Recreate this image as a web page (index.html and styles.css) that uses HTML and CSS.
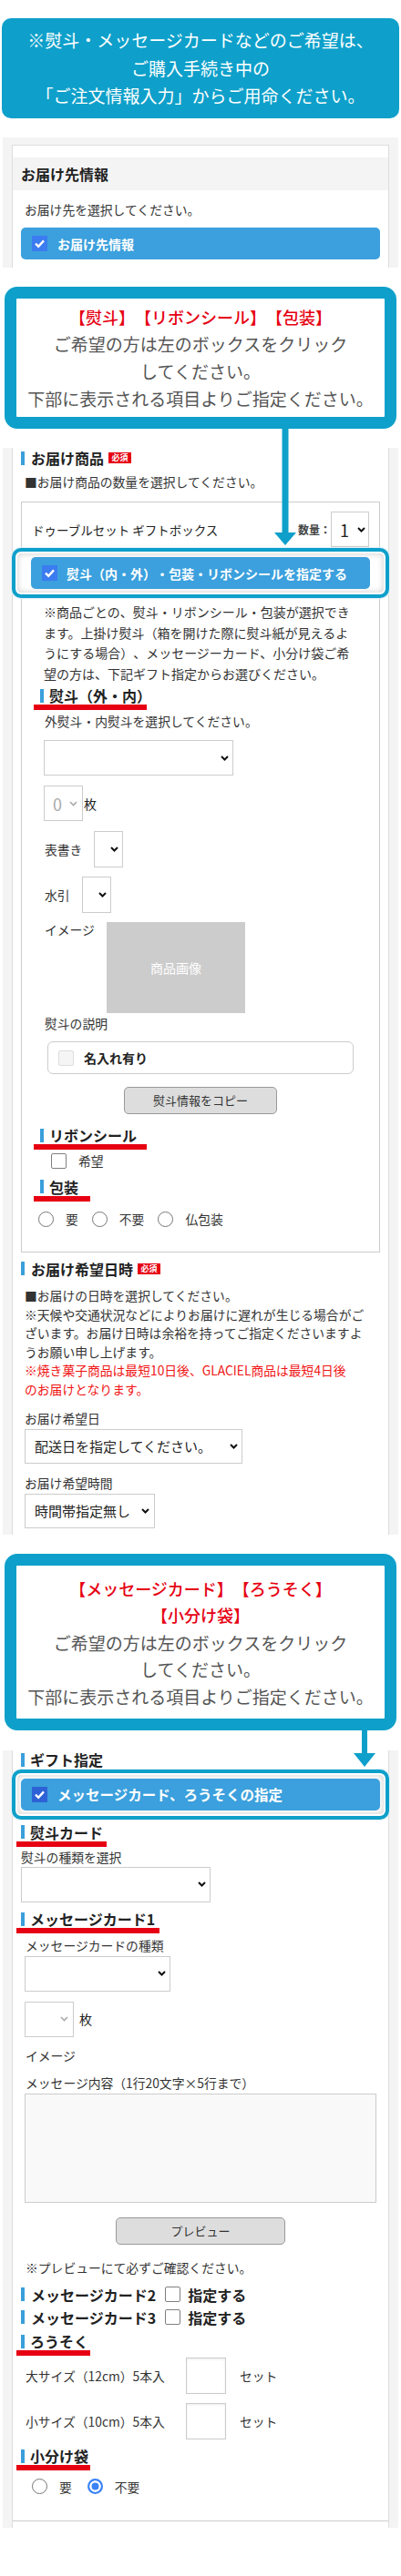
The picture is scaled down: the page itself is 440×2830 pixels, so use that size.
FILE: index.html
```html
<!DOCTYPE html>
<html lang="ja">
<head>
<meta charset="utf-8">
<title>ギフト指定</title>
<link rel="stylesheet" href="styles.css">
</head>
<body>
<main class="page">
  <div class="banner">※熨斗・メッセージカードなどのご希望は、<br>ご購入手続き中の<br>「ご注文情報入力」からご用命ください。</div>

  <section class="panel panel-first">
    <div class="card card-first">
      <h2 class="card-head">お届け先情報</h2>
      <p class="txt txt-first">お届け先を選択してください。</p>
      <div class="opt-btn opt-btn-first">
        <svg class="cb" viewBox="0 0 17 17"><rect width="17" height="17" fill="#3b7cf0"/><path d="M4 8.6l3.2 3.2L13 5.4" fill="none" stroke="#fff" stroke-width="2.4"/></svg>
        <span>お届け先情報</span>
      </div>
    </div>
  </section>

  <div class="callout callout-1">
    <p class="c-red">【熨斗】【リボンシール】【包装】</p>
    <p class="c-gray">ご希望の方は左のボックスをクリック<br>してください。<br>下部に表示される項目よりご指定ください。</p>
    <svg class="arrow arrow-1" viewBox="0 0 24 128"><rect x="8.5" y="0" width="7" height="115"/><polygon points="0,114 24,114 12,128"/></svg>
  </div>

  <section class="panel">
    <div class="card card-goods">
      <h3 class="sec-head sh-goods">お届け商品<span class="req">必須</span></h3>
      <p class="txt lead">■お届け商品の数量を選択してください。</p>
      <div class="product">
        <div class="prod-row">
          <span class="prod-name">ドゥーブルセット ギフトボックス</span>
          <span class="qty"><span class="qty-label">数量：</span><span class="sel sel-qty"><span>1</span><svg class="chev" viewBox="0 0 9 6"><path d="M1 1l3.5 3.5L8 1" fill="none" stroke="#111" stroke-width="2"/></svg></span></span>
        </div>
        <div class="ring ring-1">
          <div class="opt-btn opt-btn-sm">
            <svg class="cb" viewBox="0 0 17 17"><rect width="17" height="17" fill="#3b7cf0"/><path d="M4 8.6l3.2 3.2L13 5.4" fill="none" stroke="#fff" stroke-width="2.4"/></svg>
            <span>熨斗（内・外）・包装・リボンシールを指定する</span>
          </div>
        </div>
        <div class="gift-detail">
          <p class="note">※商品ごとの、熨斗・リボンシール・包装が選択でき<br>ます。上掛け熨斗（箱を開けた際に熨斗紙が見えるよ<br>うにする場合）、メッセージーカード、小分け袋ご希<br>望の方は、下記ギフト指定からお選びください。</p>
          <h4 class="ul-head ul-in w124 ul-first">熨斗（外・内）</h4>
          <p class="txt d-sub">外熨斗・内熨斗を選択してください。</p>
          <div class="sel sel-noshi"><svg class="chev" viewBox="0 0 9 6"><path d="M1 1l3.5 3.5L8 1" fill="none" stroke="#111" stroke-width="2"/></svg></div>
          <div class="count-row"><span class="sel sel-count"><span>0</span><svg class="chev" viewBox="0 0 9 6"><path d="M1 1l3.5 3.5L8 1" fill="none" stroke="#aaa" stroke-width="1.6"/></svg></span><span class="unit">枚</span></div>
          <div class="field-row fr-omote"><span class="txt">表書き</span><span class="sel sel-tiny"><svg class="chev" viewBox="0 0 9 6"><path d="M1 1l3.5 3.5L8 1" fill="none" stroke="#111" stroke-width="2"/></svg></span></div>
          <div class="field-row fr-mizu"><span class="txt">水引</span><span class="sel sel-tiny"><svg class="chev" viewBox="0 0 9 6"><path d="M1 1l3.5 3.5L8 1" fill="none" stroke="#111" stroke-width="2"/></svg></span></div>
          <div class="field-row fr-img"><span class="txt img-label">イメージ</span><div class="img-ph">商品画像</div></div>
          <p class="txt d-desc">熨斗の説明</p>
          <div class="name-box"><span class="cb-empty"></span><span>名入れ有り</span></div>
          <div class="btn-gray btn-copy">熨斗情報をコピー</div>
          <h4 class="ul-head ul-in w124 ul-ribbon">リボンシール</h4>
          <div class="check-row"><span class="cb-box"></span><span class="txt">希望</span></div>
          <h4 class="ul-head ul-in w62 ul-wrap">包装</h4>
          <div class="radio-row rr-wrap">
            <span class="radio"><span class="rd"></span>要</span>
            <span class="radio"><span class="rd"></span>不要</span>
            <span class="radio"><span class="rd"></span>仏包装</span>
          </div>
        </div>
      </div>
      <h3 class="sec-head sh-date">お届け希望日時<span class="req">必須</span></h3>
      <p class="txt notice">■お届けの日時を選択してください。<br>※天候や交通状況などによりお届けに遅れが生じる場合がご<br>ざいます。お届け日時は余裕を持ってご指定くださいますよ<br>うお願い申し上げます。<br><span class="red">※焼き菓子商品は最短10日後、GLACIEL商品は最短4日後<br>のお届けとなります。</span></p>
      <p class="txt lbl lbl-date">お届け希望日</p>
      <div class="sel sel-date"><span>配送日を指定してください。</span><svg class="chev" viewBox="0 0 9 6"><path d="M1 1l3.5 3.5L8 1" fill="none" stroke="#111" stroke-width="2"/></svg></div>
      <p class="txt lbl lbl-time">お届け希望時間</p>
      <div class="sel sel-time"><span>時間帯指定無し</span><svg class="chev" viewBox="0 0 9 6"><path d="M1 1l3.5 3.5L8 1" fill="none" stroke="#111" stroke-width="2"/></svg></div>
    </div>
  </section>

  <div class="callout callout-2">
    <p class="c-red">【メッセージカード】【ろうそく】<br>【小分け袋】</p>
    <p class="c-gray">ご希望の方は左のボックスをクリック<br>してください。<br>下部に表示される項目よりご指定ください。</p>
    <svg class="arrow arrow-2" viewBox="0 0 24 40"><rect x="9" y="0" width="6" height="26"/><polygon points="0,25 24,25 12,40"/></svg>
  </div>

  <section class="panel panel-last">
    <div class="card card-gift">
      <h3 class="sec-head sh-gift">ギフト指定</h3>
      <div class="ring ring-2">
        <div class="opt-btn opt-btn-lg">
          <svg class="cb" viewBox="0 0 17 17"><rect width="17" height="17" fill="#2d62d6"/><path d="M4 8.6l3.2 3.2L13 5.4" fill="none" stroke="#fff" stroke-width="2.4"/></svg>
          <span>メッセージカード、ろうそくの指定</span>
        </div>
      </div>
      <h4 class="ul-head ul-out w99 ul-noshi">熨斗カード</h4>
      <p class="txt g-sub">熨斗の種類を選択</p>
      <div class="sel sel-gnoshi"><svg class="chev" viewBox="0 0 9 6"><path d="M1 1l3.5 3.5L8 1" fill="none" stroke="#111" stroke-width="2"/></svg></div>
      <h4 class="ul-head ul-out w157 ul-mc1">メッセージカード1</h4>
      <p class="txt g-lbl g-mctype">メッセージカードの種類</p>
      <div class="sel sel-mctype"><svg class="chev" viewBox="0 0 9 6"><path d="M1 1l3.5 3.5L8 1" fill="none" stroke="#111" stroke-width="2"/></svg></div>
      <div class="count-row count-row-g"><span class="sel sel-count-g"><svg class="chev" viewBox="0 0 9 6"><path d="M1 1l3.5 3.5L8 1" fill="none" stroke="#aaa" stroke-width="1.6"/></svg></span><span class="unit unit-g">枚</span></div>
      <p class="txt g-lbl g-img">イメージ</p>
      <p class="txt g-lbl g-msg">メッセージ内容（1行20文字×5行まで）</p>
      <div class="textarea"></div>
      <div class="btn-gray btn-preview">プレビュー</div>
      <p class="txt g-lbl g-note">※プレビューにて必ずご確認ください。</p>
      <div class="sec-head mc-row mc2">メッセージカード2<span class="cb-box"></span><span class="mc-do">指定する</span></div>
      <div class="sec-head mc-row mc3">メッセージカード3<span class="cb-box"></span><span class="mc-do">指定する</span></div>
      <h4 class="ul-head ul-out w81 ul-candle">ろうそく</h4>
      <div class="candle-row candle-lg"><span class="candle-label">大サイズ（12cm）5本入</span><span class="num-box"></span><span class="set">セット</span></div>
      <div class="candle-row candle-sm"><span class="candle-label">小サイズ（10cm）5本入</span><span class="num-box"></span><span class="set">セット</span></div>
      <h4 class="ul-head ul-out w81 ul-bag">小分け袋</h4>
      <div class="radio-row rr-bag">
        <span class="radio"><span class="rd"></span>要</span>
        <span class="radio"><span class="rd rd-on"></span>不要</span>
      </div>
      <div class="divider"></div>
    </div>
  </section>
</main>
</body>
</html>
```

FILE: styles.css
```css
* { box-sizing: border-box; margin: 0; padding: 0; }
html, body { background: #fff; }
body {
  width: 440px;
  font-family: "Noto Sans CJK JP", "Noto Sans", sans-serif;
  color: #333;
  text-spacing-trim: space-all;
}
.page { padding: 20px 0 51px; }

/* top banner */
.banner {
  margin: 0 2px;
  height: 110px;
  border-radius: 10px;
  background: #0ea0ca;
  color: #fff;
  font-size: 19px;
  line-height: 30.5px;
  text-align: center;
  display: flex;
  align-items: center;
  justify-content: center;
}

/* panels / cards */
.panel { margin: 21px 3px 0; padding: 0 10px; background: #f4f4f4; }
.panel-first { height: 143px; padding-top: 8px; overflow: hidden; }
.panel-last { margin-top: 22px; }
.card { background: #fff; border-left: 1px solid #ddd; border-right: 1px solid #ddd; padding: 0 9px; }
.card-first { height: 100%; border-top: 1px solid #ddd; padding-top: 13px; }
.card-goods { padding-bottom: 7px; }
.card-gift { padding-bottom: 7px; }
.card-head {
  margin: 0 -9px;
  padding-left: 9px;
  height: 36px;
  line-height: 36px;
  background: #f4f4f4;
  font-size: 16px;
  font-weight: 700;
  color: #222;
}
.txt { font-size: 13.8px; line-height: 20px; color: #333; }
.txt-first { margin-top: 11px; padding-left: 4px; }

/* blue option buttons */
.opt-btn {
  display: flex;
  align-items: center;
  height: 35px;
  padding-left: 12px;
  gap: 11px;
  background: #3ba0dd;
  border-radius: 5px;
  color: #fff;
  font-size: 14px;
  font-weight: 700;
  white-space: nowrap;
}
.opt-btn-first { margin-top: 10px; }
.opt-btn-sm { gap: 10px; }
.opt-btn-lg { font-size: 15.5px; }
.cb { width: 17px; height: 17px; flex: none; }

/* callouts */
.callout {
  position: relative;
  z-index: 2;
  margin: 21px 5px 0;
  border: 13px solid #0ea0ca;
  border-radius: 14px;
  background: #fff;
  text-align: center;
}
.callout-1 { padding: 5px 0; line-height: 30px; }
.callout-2 { padding: 11px 0 9.5px; line-height: 29.5px; }
.c-red { color: #e60012; font-size: 18px; font-weight: 500; }
.c-gray { color: #555; font-size: 19px; }
.arrow { position: absolute; top: calc(100% + 13px); fill: #0ea0ca; }
.arrow-1 { left: 283px; width: 24px; height: 128px; }
.arrow-2 { left: 370px; width: 24px; height: 40px; }

/* headings */
.sec-head {
  display: flex;
  align-items: center;
  font-size: 16px;
  font-weight: 700;
  line-height: 22px;
  color: #222;
  white-space: nowrap;
}
.sec-head::before, .ul-head::before {
  content: "";
  flex: none;
  width: 4px;
  height: 15px;
  background: #3a9fdb;
  margin-right: 7px;
}
.req {
  margin-left: 5px;
  width: 25px;
  height: 12px;
  background: #e60012;
  color: #fff;
  font-size: 9px;
  line-height: 12px;
  text-align: center;
  font-weight: 700;
}
.sh-goods { margin-top: 3px; }
.lead { margin-top: 5px; padding-left: 4px; }

.ul-head {
  display: flex;
  align-items: center;
  border-bottom: 6px solid #e60012;
  font-size: 16px;
  font-weight: 700;
  line-height: 20px;
  color: #222;
  white-space: nowrap;
}
.ul-head::before { margin-right: 6px; }
.ul-in { margin-left: -7px; padding-left: 7px; }
.ul-out { margin-left: -5px; padding-left: 5px; }
.w62 { width: 62px; }
.w81 { width: 81px; }
.w99 { width: 99px; }
.w124 { width: 124px; }
.w157 { width: 157px; }

/* product box */
.product { margin-top: 12px; border: 1px solid #ccc; padding: 10px 11px 26px; }
.prod-row { display: flex; align-items: center; justify-content: space-between; height: 39px; }
.prod-name { font-size: 13.5px; color: #222; }
.qty { display: flex; align-items: center; }
.qty-label { font-size: 12px; font-weight: 700; color: #444; }

.sel {
  display: flex;
  align-items: center;
  height: 39px;
  border: 1px solid #ccc;
  background: #fff;
  padding: 0 4px 0 10px;
  font-size: 15px;
  color: #222;
  white-space: nowrap;
}
.chev { width: 9px; height: 6px; flex: none; margin-left: auto; }
.sel-qty { width: 42px; font-size: 18px; padding: 0 3px 0 9px; }

.ring {
  border: 4px solid #0ea0ca;
  border-radius: 10px;
  background: #fff;
  box-shadow: 0 0 0 1px #dff1f8, inset 0 0 0 2px #fff, inset 0 0 6px 3px rgba(0, 0, 0, 0.16);
}
.ring-1 { margin: 1px -22px 0; padding: 6px 17px; }
.ring-2 { margin: 0 -10px; padding: 6px; }

.gift-detail { padding: 0 9px; }
.note { margin-top: 4px; padding-left: 4px; font-size: 14px; line-height: 22.5px; color: #333; white-space: nowrap; }
.ul-first { margin-top: 3px; }
.d-sub { margin-top: 2px; padding-left: 5px; }
.sel-noshi { margin: 11px 0 0 4px; width: 208px; }
.count-row { display: flex; align-items: center; margin: 11px 0 0 4px; }
.sel-count { width: 43px; color: #aaa; font-size: 18px; padding: 0 5px 0 9px; }
.unit { font-size: 14px; margin-left: 1px; color: #222; }
.field-row { display: flex; align-items: center; gap: 13px; padding-left: 5px; }
.fr-omote { margin-top: 11px; }
.fr-mizu { margin-top: 10px; }
.sel-tiny { width: 32px; height: 40px; }
.fr-img { margin-top: 10px; align-items: flex-start; }
.img-label { line-height: 16px; }
.img-ph {
  width: 152px;
  height: 100px;
  background: #ccc;
  color: #fff;
  font-size: 14px;
  display: flex;
  align-items: center;
  justify-content: center;
}
.d-desc { margin-top: 1px; padding-left: 5px; }
.name-box {
  margin: 10px 0 0 8px;
  width: 336px;
  height: 36px;
  border: 1px solid #ccc;
  border-radius: 6px;
  display: flex;
  align-items: center;
  padding-left: 11px;
  gap: 11px;
  font-size: 14px;
  font-weight: 700;
  color: #222;
}
.cb-empty { width: 17px; height: 17px; background: #f5f5f5; border: 1px solid #ddd; border-radius: 2px; }
.btn-gray {
  margin: 0 auto;
  height: 30px;
  border: 1px solid #999;
  border-radius: 5px;
  background: #ddd;
  text-align: center;
  font-size: 13px;
  line-height: 28px;
  color: #333;
}
.btn-copy { margin-top: 14px; width: 168px; }
.ul-ribbon { margin-top: 13px; }
.check-row { display: flex; align-items: center; gap: 13px; margin-top: 2px; padding-left: 12px; }
.cb-box { flex: none; width: 17px; height: 17px; border: 1.5px solid #808080; border-radius: 2px; background: #fff; }
.ul-wrap { margin-top: 8.5px; }
.radio-row { display: flex; align-items: center; font-size: 13.8px; line-height: 20px; color: #333; }
.radio { display: flex; align-items: center; gap: 13px; }
.rr-wrap { margin: 9.5px 0 0 -2px; gap: 15px; }
.rd { flex: none; width: 17px; height: 17px; border-radius: 50%; border: 1.5px solid #767676; background: #fff; }
.rd-on { border: 2px solid #3b82f6; background: #3b82f6; box-shadow: inset 0 0 0 2.5px #fff; }

/* delivery date */
.sh-date { margin-top: 6.5px; }
.notice { margin-top: 8.5px; padding-left: 4px; line-height: 20.6px; white-space: nowrap; }
.red { color: #f01414; }
.lbl { padding-left: 4px; }
.lbl-date { margin-top: 11.4px; }
.sel-date { margin: 2px 0 0 4px; width: 239px; height: 38px; }
.lbl-time { margin-top: 11px; }
.sel-time { margin: 2px 0 0 4px; width: 143px; height: 38px; padding-right: 5px; }

/* gift panel */
.sh-gift { line-height: 21px; }
.sh-gift::before { margin-right: 6px; }
.ul-noshi { margin-top: 4px; }
.g-sub { margin-top: 1px; }
.sel-gnoshi { margin-top: 1px; width: 208px; }
.ul-mc1 { margin-top: 8.5px; }
.g-lbl { padding-left: 5px; }
.g-mctype { margin-top: 2.5px; }
.sel-mctype { margin: 2px 0 0 4px; width: 160px; }
.sel-count-g { width: 54px; padding-right: 5px; }
.unit-g { margin-left: 6px; }
.g-img { margin-top: 10px; }
.g-msg { margin-top: 10px; }
.textarea { margin: 2px 0 0 4px; width: 386px; height: 120px; border: 1px solid #ccc; background: #f9f9f9; }
.btn-preview { margin-top: 16px; width: 186px; }
.g-note { margin-top: 15px; }
.mc-row { line-height: 20px; }
.mc2 { margin-top: 10px; }
.mc3 { margin-top: 5px; }
.mc-row .cb-box { margin-left: 10px; }
.mc-do { margin-left: 8px; }
.ul-candle { margin-top: 6.5px; }
.candle-row { display: flex; align-items: center; }
.candle-lg { margin-top: 1.5px; }
.candle-sm { margin-top: 10px; }
.candle-label { width: 181px; padding-left: 5px; font-size: 13.8px; color: #333; white-space: nowrap; }
.num-box { width: 44px; height: 40px; border: 1px solid #ccc; box-shadow: inset 0 1px 3px rgba(0, 0, 0, 0.08); }
.set { margin-left: 15px; font-size: 13.8px; color: #333; }
.ul-bag { margin-top: 8.5px; }
.rr-bag { margin-top: 7.5px; padding-left: 12px; gap: 17px; }
.divider { margin: 27px -9px 0; height: 1px; background: #ccc; }
```
